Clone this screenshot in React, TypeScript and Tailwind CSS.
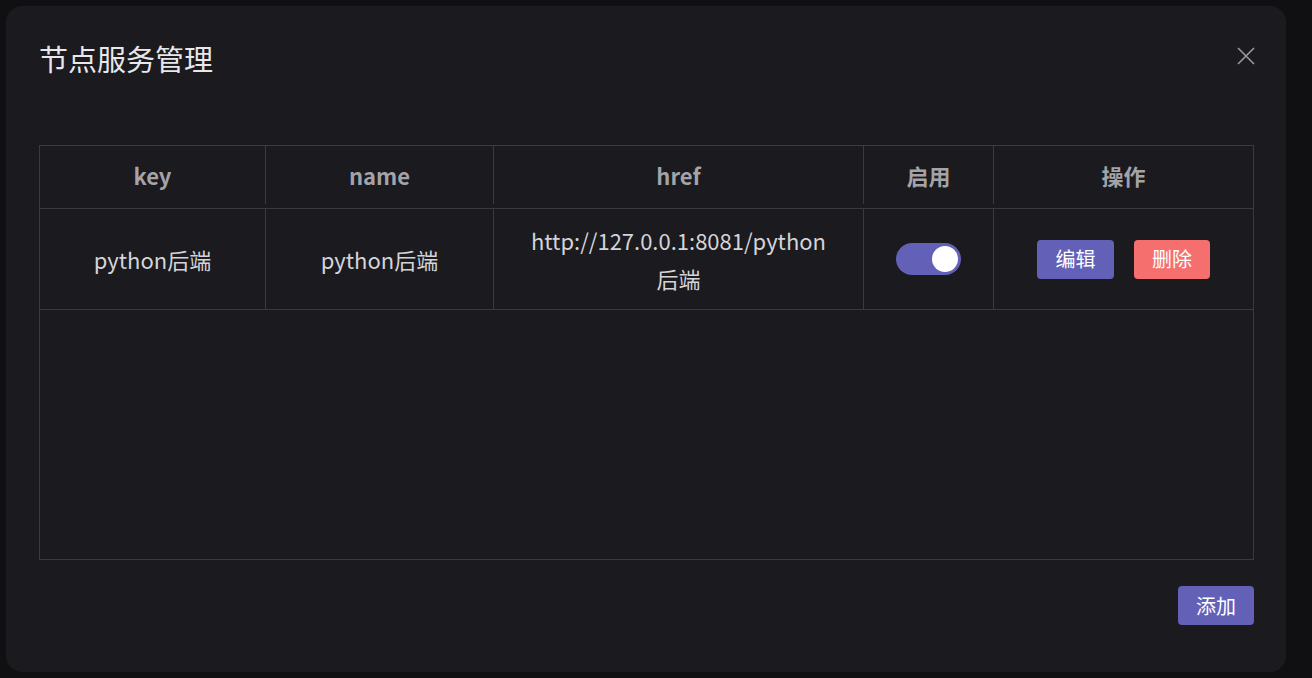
export default function App() {
  const font = { fontFamily: '"Noto Sans CJK SC", "Noto Sans", sans-serif' };
  const cell = "border-r border-[#3a3a3f] flex items-center justify-center text-center";
  return (
    <div className="w-[1312px] h-[678px] bg-[#101013] p-[6px] pr-[26px]" style={font}>
      <div className="h-[666px] bg-[#1a1a1f] rounded-[16px] pl-[33px] pr-[32px] pt-[28px] flex flex-col">
        <div className="flex items-center justify-between h-[48px]">
          <div className="text-[29px] text-[#e8e8ea] leading-none">节点服务管理</div>
          <svg width="20" height="20" viewBox="0 0 20 20" className="mr-[-2px] mt-[-4px]">
            <path d="M2 2L18 18M18 2L2 18" stroke="#9a9aa0" strokeWidth="1.6" />
          </svg>
        </div>
        <div className="mt-[63px] border border-[#3a3a3f] h-[415px] flex flex-col">
          <div className="flex h-[63px] border-b border-[#3a3a3f] text-[22px] font-bold text-[#a3a3a8] pb-[4px]">
            <div className={`${cell} w-[226px]`}>key</div>
            <div className={`${cell} w-[228px]`}>name</div>
            <div className={`${cell} w-[370px]`}>href</div>
            <div className={`${cell} w-[130px]`}>启用</div>
            <div className="flex-1 flex items-center justify-center">操作</div>
          </div>
          <div className="flex h-[101px] border-b border-[#3a3a3f] text-[22px] text-[#d4d4d8] leading-[38px]">
            <div className={`${cell} w-[226px]`}>python后端</div>
            <div className={`${cell} w-[228px]`}>python后端</div>
            <div className={`${cell} w-[370px] px-[20px]`}>http://127.0.0.1:8081/python<br />后端</div>
            <div className={`${cell} w-[130px]`}>
              <div className="w-[65px] h-[32px] rounded-full bg-[#6360b8] flex items-center justify-end pr-[3px]">
                <div className="w-[26px] h-[26px] rounded-full bg-white" />
              </div>
            </div>
            <div className="flex-1 flex items-center justify-center gap-[20px] text-[20px] text-white">
              <div className="w-[77px] h-[39px] rounded-[4px] bg-[#6360b8] flex items-center justify-center">编辑</div>
              <div className="w-[76px] h-[39px] rounded-[4px] bg-[#f56f6f] flex items-center justify-center">删除</div>
            </div>
          </div>
        </div>
        <div className="flex justify-end mt-[26px]">
          <div className="w-[76px] h-[39px] rounded-[4px] bg-[#6360b8] flex items-center justify-center text-[20px] text-white">添加</div>
        </div>
      </div>
    </div>
  );
}
